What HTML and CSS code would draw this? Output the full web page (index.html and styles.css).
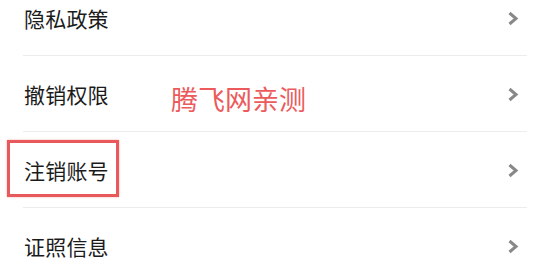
FILE: index.html
```html
<!DOCTYPE html>
<html lang="zh-CN">
<head>
    <meta charset="UTF-8">
    <meta name="viewport" content="width=device-width, initial-scale=1.0">
    <title>设置</title>
    <link rel="stylesheet" href="styles.css">
</head>
<body>
<div class="page">
    <ul class="menu">
        <!-- 隐私政策 -->
        <li class="menu-item">
            <span class="label">隐私政策</span>
            <svg class="arrow" viewBox="0 0 12 15"><path d="M2.5 2 L9 7.5 L2.5 13"/></svg>
        </li>
        <!-- 撤销权限 -->
        <li class="menu-item">
            <span class="label">撤销权限</span>
            <svg class="arrow" viewBox="0 0 12 15"><path d="M2.5 2 L9 7.5 L2.5 13"/></svg>
        </li>
        <!-- 注销账号 -->
        <li class="menu-item">
            <span class="label marked">注销账号</span>
            <svg class="arrow" viewBox="0 0 12 15"><path d="M2.5 2 L9 7.5 L2.5 13"/></svg>
        </li>
        <!-- 证照信息 -->
        <li class="menu-item">
            <span class="label">证照信息</span>
            <svg class="arrow" viewBox="0 0 12 15"><path d="M2.5 2 L9 7.5 L2.5 13"/></svg>
        </li>
    </ul>
    <div class="stamp">腾飞网亲测</div>
</div>
</body>
</html>
```

FILE: styles.css
```css
body {
    margin: 0;
    background: #fff;
    font-family: "Noto Sans CJK SC", "Noto Sans", sans-serif;
}

.page {
    position: relative;
    height: 275px;
    overflow: hidden;
}

.menu {
    list-style: none;
    margin: -20px 23px 0;
    padding: 0;
}

.menu-item {
    display: flex;
    align-items: center;
    justify-content: space-between;
    height: 74px;
    padding: 1px 8px 0 1px;
    border-bottom: 1px solid #ececec;
}

.label {
    position: relative;
    font-size: 21px;
    line-height: 30px;
    color: #1b1b1b;
    letter-spacing: 0.2px;
}

.marked::after {
    content: "";
    position: absolute;
    left: -17px;
    top: -15px;
    width: 106px;
    height: 51px;
    border: 3px solid #e8595b;
    box-shadow: 0 0 2px rgba(232, 89, 91, 0.5);
}

.arrow {
    width: 12px;
    height: 15px;
    fill: none;
    stroke: #888;
    stroke-width: 3;
}

.stamp {
    position: absolute;
    left: 171px;
    top: 82px;
    font-size: 27px;
    line-height: 34px;
    color: #ec5a5c;
}
```
